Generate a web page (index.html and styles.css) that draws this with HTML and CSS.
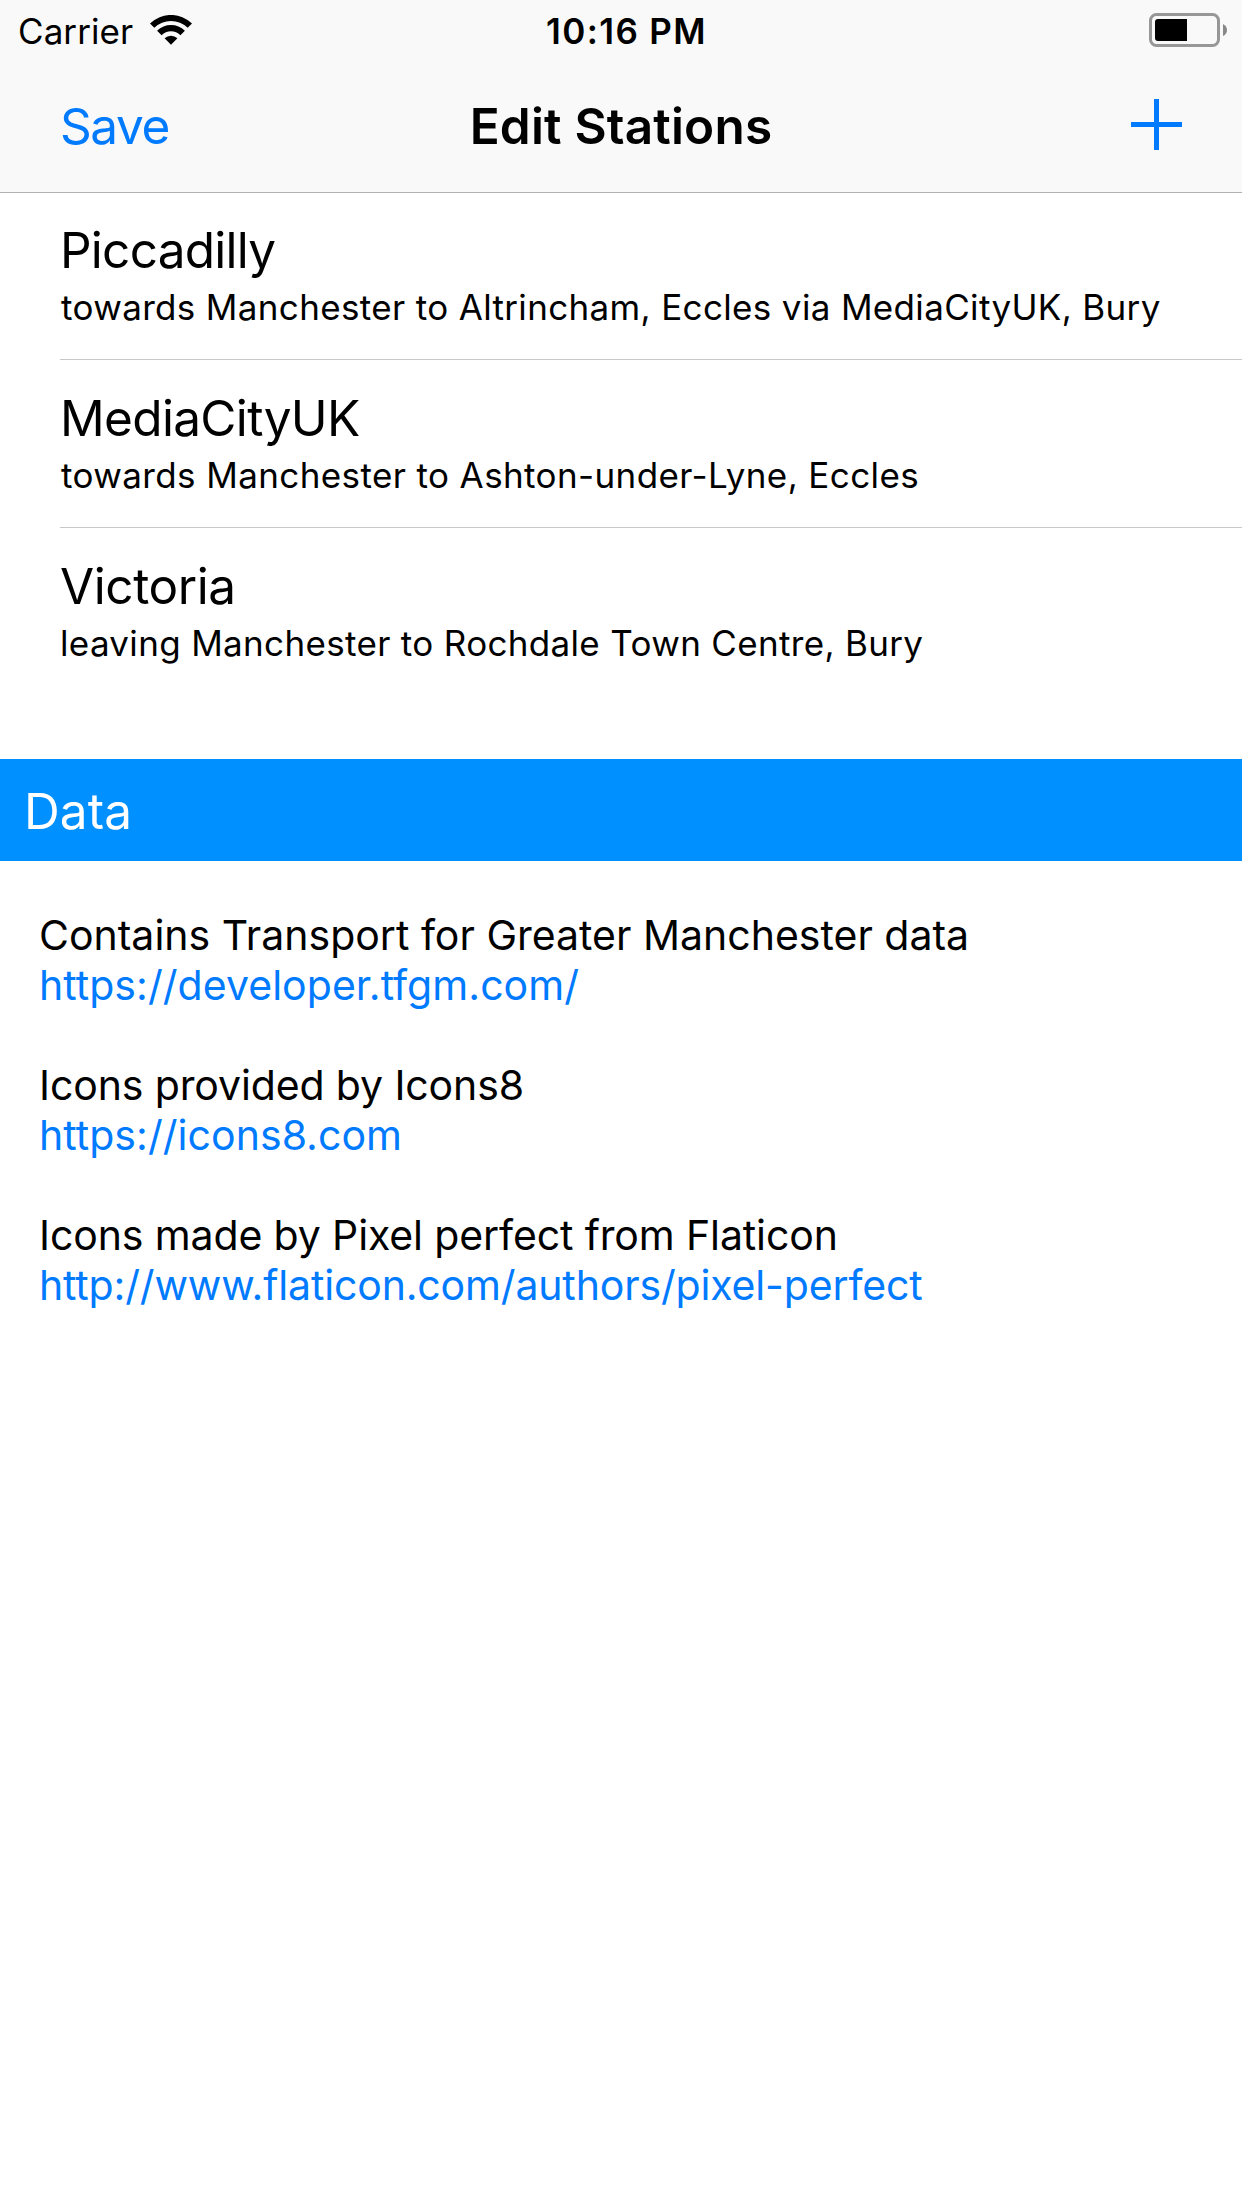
FILE: index.html
```html
<!DOCTYPE html>
<html lang="en">
<head>
<meta charset="utf-8">
<title>Edit Stations</title>
<link rel="stylesheet" href="styles.css">
</head>
<body>
<header class="header">
  <div class="status">
    <div class="status-left">
      <span class="carrier">Carrier</span>
      <svg class="wifi" width="42" height="30" viewBox="0 0 42 30">
        <path d="M0 8.5A30 30 0 0 1 42 8.5L37.7 12.8A24 24 0 0 0 4.3 12.8Z"/>
        <path d="M7.1 15.7A20 20 0 0 1 34.9 15.7L30.4 20.2A13.4 13.4 0 0 0 11.6 20.2Z"/>
        <path d="M14.6 23.3A9.2 9.2 0 0 1 27.4 23.3L21 29.8Z"/>
      </svg>
    </div>
    <time class="clock">10:16 PM</time>
    <svg class="battery" width="78" height="34" viewBox="0 0 78 34">
      <rect x="1.5" y="1.5" width="68" height="31" rx="6" fill="none" stroke="#979797" stroke-width="3"/>
      <path d="M38 6V28H9a3 3 0 0 1-3-3V9a3 3 0 0 1 3-3Z"/>
      <path d="M74 11Q78 13 78 17T74 23Z" fill="#888"/>
    </svg>
  </div>
  <nav class="nav">
    <a class="save">Save</a>
    <h1 class="title">Edit Stations</h1>
    <svg class="add" width="51" height="51" viewBox="0 0 51 51">
      <path d="M23 0h5v23h23v5H28v23h-5V28H0v-5h23Z" fill="#007aff"/>
    </svg>
  </nav>
</header>
<main>
  <ul class="stations">
    <li class="station">
      <div class="name piccadilly">Piccadilly</div>
      <div class="route">towards Manchester to Altrincham, Eccles via MediaCityUK, Bury</div>
    </li>
    <li class="station">
      <div class="name">MediaCityUK</div>
      <div class="route ashton">towards Manchester to Ashton-under-Lyne, Eccles</div>
    </li>
    <li class="station">
      <div class="name victoria">Victoria</div>
      <div class="route leaving">leaving Manchester to Rochdale Town Centre, Bury</div>
    </li>
  </ul>
  <h2 class="section">Data</h2>
  <div class="credits">
    <div class="credit">
      <p>Contains Transport for Greater Manchester data</p>
      <p><a class="link">https://developer.tfgm.com/</a></p>
    </div>
    <div class="credit">
      <p class="icons">Icons provided by Icons8</p>
      <p><a class="link">https://icons8.com</a></p>
    </div>
    <div class="credit">
      <p class="icons">Icons made by Pixel perfect from Flaticon</p>
      <p><a class="link long">http://www.flaticon.com/authors/pixel-perfect</a></p>
    </div>
  </div>
</main>
</body>
</html>
```
FILE: styles.css
```css
* { box-sizing: border-box; }

body {
  margin: 0;
  min-height: 2208px;
  background: #fff;
  color: #000;
  font-family: Inter, "Liberation Sans", sans-serif;
  white-space: nowrap;
}

h1, h2, p, ul { margin: 0; padding: 0; font-weight: 400; }
ul { list-style: none; }
svg { display: block; }

.header {
  background: #f9f9f9;
  box-shadow: 0 1px 0 #b2b2b2;
}

.status {
  display: grid;
  grid-template-columns: 1fr auto 1fr;
  height: 60px;
  padding: 0 15px 0 18px;
  font-size: 35px;
  line-height: 62px;
}
.status-left { display: flex; }
.carrier { width: 132px; letter-spacing: 0.07px; }
.wifi { margin-top: 15px; }
.clock { font-weight: 600; letter-spacing: 1.38px; padding-left: 8px; }
.battery { justify-self: end; margin-top: 13px; }

.nav {
  display: grid;
  grid-template-columns: 1fr auto 1fr;
  height: 132px;
  padding: 0 60px;
  font-size: 49.5px;
  line-height: 132px;
}
.save { color: #007aff; letter-spacing: -1.4px; }
.title { font-size: inherit; font-weight: 600; letter-spacing: 0.19px; }
.add { justify-self: end; margin-top: 39px; }

.stations { padding-left: 60px; }
.station {
  height: 168px;
  padding-top: 28px;
  border-bottom: 1px solid #c8c7cc;
}
.station:last-child { border-bottom: 0; }
.name { font-size: 49.5px; line-height: 60px; letter-spacing: -0.66px; }
.piccadilly { letter-spacing: -0.75px; }
.victoria { letter-spacing: -0.42px; }
.route {
  margin-top: 4px;
  padding-left: 1px;
  font-size: 35px;
  line-height: 46px;
  letter-spacing: 0.345px;
}
.ashton { letter-spacing: 0.387px; }
.leaving { padding-left: 0; letter-spacing: 0.332px; }

.section {
  height: 102px;
  margin-top: 63px;
  padding-left: 24px;
  background: #0090ff;
  color: #fff;
  font-size: 49.5px;
  line-height: 104px;
  letter-spacing: 0.1px;
}

.credits {
  display: flex;
  flex-direction: column;
  gap: 50px;
  padding: 49px 39px;
  font-size: 41px;
  line-height: 50px;
}
.icons { letter-spacing: -0.12px; }
.link { color: #007aff; letter-spacing: 0.05px; }
.long { letter-spacing: -0.157px; }
```
